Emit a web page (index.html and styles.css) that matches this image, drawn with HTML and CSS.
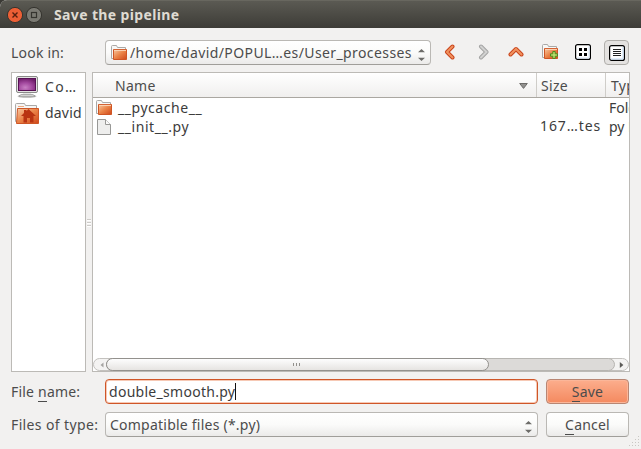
FILE: index.html
```html
<!DOCTYPE html>
<html lang="en">
<head>
<meta charset="utf-8">
<title>Save the pipeline</title>
<link rel="stylesheet" href="styles.css">
</head>
<body>
<svg width="0" height="0" class="defs" aria-hidden="true">
  <defs>
    <linearGradient id="folder" x1="0" y1="0" x2="1" y2="1"><stop offset="0" stop-color="#f8c9a2"/><stop offset=".5" stop-color="#ea8246"/><stop offset="1" stop-color="#cf471b"/></linearGradient>
    <radialGradient id="screen" cx=".4" cy=".75" r=".8"><stop offset="0" stop-color="#c87fc4"/><stop offset=".5" stop-color="#a2489e"/><stop offset="1" stop-color="#6d1a68"/></radialGradient>
    <symbol id="icon-folder" viewBox="0 0 16 16">
      <path d="M.5 13.5V1.5Q.5.5 1.5.5H5.5L6.5 2.5H14.5V13.5Z" fill="#f7f7f6" stroke="#aaa9a7"/>
      <path d="M2.5 4.5H15.5V14.5H2.5Z" fill="url(#folder)" stroke="#cf5524"/>
      <path d="M3 5.4H15" stroke="#fbd7ba"/>
    </symbol>
  </defs>
</svg>
<div class="dialog">
  <header class="titlebar">
    <svg class="winbtns" width="36" height="18" viewBox="0 0 36 18">
      <circle cx="9" cy="9" r="7.6" fill="#ed5f35" stroke="#35342f"/>
      <path d="M6.5 6.5L11.5 11.5M11.5 6.5L6.5 11.5" stroke="#57200f" stroke-width="1.4"/>
      <circle cx="28" cy="9" r="7.6" fill="#7b7a73" stroke="#35342f"/>
      <rect x="25.5" y="6.5" width="5" height="5" fill="none" stroke="#35342f" stroke-width="1.2"/>
    </svg>
    <h1>Save the pipeline</h1>
  </header>

  <div class="row lookin">
    <span class="label l-look">Look in:</span>
    <div class="combo path">
      <svg class="i16" width="16" height="16"><use href="#icon-folder"/></svg>
      <span class="t-path">/home/david/POPUL…es/User_processes</span>
      <svg class="spin" width="7" height="12" viewBox="0 0 7 12"><path d="M0 3.2L3.5 0L7 3.2ZM0 8.8L3.5 12L7 8.8Z" fill="#6d6c69"/></svg>
    </div>
    <div class="tools">
      <svg width="12" height="16" viewBox="0 0 12 16"><path d="M8.5 2.5L3 8L8.5 13.5" fill="none" stroke="#c9441b" stroke-width="4" stroke-linecap="round" stroke-linejoin="round"/><path d="M8.5 2.5L3 8L8.5 13.5" fill="none" stroke="#f0925f" stroke-width="2" stroke-linecap="round"/></svg>
      <svg class="t-fwd" width="12" height="16" viewBox="0 0 12 16"><path d="M3 2.5L8.5 8L3 13.5" fill="none" stroke="#a4a4a3" stroke-width="4" stroke-linecap="round" stroke-linejoin="round"/><path d="M3 2.5L8.5 8L3 13.5" fill="none" stroke="#d2d2d1" stroke-width="2" stroke-linecap="round"/></svg>
      <svg class="t-up" width="16" height="12" viewBox="0 0 16 12"><path d="M2.5 8.5L8 3L13.5 8.5" fill="none" stroke="#c9441b" stroke-width="4" stroke-linecap="round" stroke-linejoin="round"/><path d="M2.5 8.5L8 3L13.5 8.5" fill="none" stroke="#f0925f" stroke-width="2" stroke-linecap="round"/></svg>
      <svg class="t-new" width="17" height="16" viewBox="0 0 17 16"><use href="#icon-folder" width="16" height="16"/><path d="M10.8 7.5h2.4v2.3h2.3v2.4h-2.3v2.3h-2.4v-2.3H8.5V9.8h2.3Z" fill="#b6dc69" stroke="#4f8d1c"/></svg>
      <svg class="t-icons" width="16" height="16" viewBox="0 0 16 16"><rect x=".6" y=".6" width="14.8" height="14.8" rx="2" fill="#fff" stroke="#000" stroke-width="1.2"/><path d="M2 14H14V2" fill="none" stroke="#d4e4f6"/><path d="M4 4h3v3H4zM9 4h3v3H9zM4 9h3v3H4zM9 9h3v3H9z"/></svg>
      <span class="toggle"><svg width="16" height="16" viewBox="0 0 16 16"><rect x=".6" y=".6" width="14.8" height="14.8" rx="2" fill="#fff" stroke="#000" stroke-width="1.2"/><path d="M2 14H14V2" fill="none" stroke="#c4dcf6"/><path d="M4 4.5h8M4 6.5h8M4 8.5h8M4 10.5h8" stroke="#222"/></svg></span>
    </div>
  </div>

  <main class="panes">
    <ul class="sidebar">
      <li>
        <svg width="24" height="24" viewBox="0 0 24 24"><ellipse cx="12" cy="21.3" rx="9.5" ry="1.8" fill="#c4c4c2"/><path d="M8 18h8l1 3H7z" fill="#e6e6e4"/><path d="M4 21.2L6 19.6H18L20 21.2Z" fill="#f0f0ee" stroke="#777" stroke-width=".6"/><rect x="1.5" y="1.5" width="21" height="16" rx="1.5" fill="#e2e2e0" stroke="#8b8b89"/><rect x="3.5" y="3.5" width="17" height="12" fill="url(#screen)" stroke="#571154"/></svg>
        <span class="t-co">Co…</span>
      </li>
      <li>
        <svg width="24" height="24" viewBox="0 0 24 24"><path d="M.5 20.5V3.5Q.5 2.5 1.5 2.5H9.5L10.5 4.5H21.5V20.5Z" fill="#f6f5f4" stroke="#aaa9a7"/><path d="M3 5.5h6" stroke="#eeaa80"/><path d="M2.5 7.5H23.5V22.5H1.5Z" fill="url(#folder)" stroke="#ce5626"/><path d="M13.5 8L21 15H18.5V21.5H15V17H12V21.5H8.5V15H6L9 12.1V9H11.5V10z" fill="#b93412"/></svg>
        <span class="t-david">david</span>
      </li>
    </ul>
    <div class="splitter"><i></i><i></i><i></i></div>
    <section class="files">
      <div class="grid head">
        <div class="c-name"><span class="t-name">Name</span><svg width="9" height="6" viewBox="0 0 9 6"><path d="M.7.5H8.3L4.5 5.4Z" fill="#92918f" stroke="#6d6c69"/></svg></div>
        <div class="c-size"><span class="t-size">Size</span></div>
        <div class="c-type">Type</div>
      </div>
      <div class="grid item">
        <div class="c-file"><svg class="i16" width="16" height="16"><use href="#icon-folder"/></svg><span class="t-cache">__pycache__</span></div>
        <div></div><div class="c-kind">Folder</div>
      </div>
      <div class="grid item">
        <div class="c-file"><svg class="i16" width="16" height="16" viewBox="0 0 16 16"><path d="M1.5.5H9.5L14.5 5.5V15.5H1.5Z" fill="#eeeeed" stroke="#989896"/><path d="M9.5.5V5.5H14.5" fill="#fafafa" stroke="#989896"/></svg><span class="t-init">__init__.py</span></div>
        <div class="c-bytes">167…tes</div><div class="c-kind">py File</div>
      </div>
      <div class="scroll">
        <svg class="arr" width="4" height="6" viewBox="0 0 4 6"><path d="M3.5.5V5.5L.5 3Z" fill="#a5a4a2"/></svg>
        <div class="trough"><div class="thumb"><i></i><i></i><i></i></div></div>
        <svg class="arr" width="5" height="6" viewBox="0 0 5 6"><path d="M.8 0V6L4.4 3Z" fill="#5c5b58"/></svg>
      </div>
    </section>
  </main>

  <div class="row name">
    <span class="label l-name">File <u>n</u>ame:</span>
    <div class="field"><span class="t-double">double_smooth.py</span><b class="caret"></b></div>
    <button class="btn save"><span><u>S</u>ave</span></button>
  </div>
  <div class="row type">
    <span class="label l-type">Files of type:</span>
    <div class="combo filter"><span class="t-compat">Compatible files (*.py)</span>
      <svg class="spin" width="7" height="12" viewBox="0 0 7 12"><path d="M0 3.2L3.5 0L7 3.2ZM0 8.8L3.5 12L7 8.8Z" fill="#6d6c69"/></svg></div>
    <button class="btn cancel"><span><u>C</u>ancel</span></button>
  </div>
  <svg class="grip" width="11" height="11" viewBox="0 0 11 11"><path d="M9 0h1v1H9zM6 3h1v1H6zM9 3h1v1H9zM3 6h1v1H3zM6 6h1v1H6zM9 6h1v1H9zM0 9h1v1H0zM3 9h1v1H3zM6 9h1v1H6zM9 9h1v1H9z" fill="#c9c7c3"/></svg>
</div>
</body>
</html>
```
FILE: styles.css
```css
* { box-sizing: border-box; }
html, body { margin: 0; height: 100%; overflow: hidden; }
body { background: #3b3a35; font: 14px/18px "Noto Sans", "Open Sans", sans-serif; color: #4c4c4c; }
svg { display: block; flex: none; }
.defs { position: absolute; }
span { white-space: nowrap; }
.dialog { position: relative; width: 641px; height: 449px; background: #f2f1f0; border-radius: 7px 0 0 0; overflow: hidden; }
.titlebar { display: flex; align-items: center; height: 28px; padding-left: 6px; background: linear-gradient(#5b5a53, #3d3c37); border-top: 1px solid #68675f; }
h1 { margin: 0 0 0 12px; font-size: 14px; line-height: 18px; font-weight: 700; letter-spacing: .36px; color: #dfdbd2; white-space: nowrap; }

.row { display: flex; align-items: center; height: 25px; margin: 0 11px; }
.lookin { margin-top: 12px; }
.name { margin-top: 7px; }
.type { margin-top: 8px; }
.label { width: 94px; flex: none; }
.l-look { letter-spacing: .2px; }
.l-name { letter-spacing: .2px; }
.l-type { letter-spacing: .37px; }
u { text-decoration: none; border-bottom: 1px solid #4c4c4c; }
.combo { display: flex; align-items: center; height: 25px; border: 1px solid #bab8b4; border-bottom-color: #a09e9a; border-radius: 4px; background: linear-gradient(#fff, #fbfbfa 50%, #ebeae9); }
.path { width: 326px; padding: 0 5px; }
.path .t-path { margin-left: 3px; letter-spacing: .4px; }
.spin { margin: 5px 0 0 auto; }
.filter { width: 433px; padding: 0 5px 0 4px; }
.t-compat { letter-spacing: .23px; }
.tools { display: flex; align-items: center; margin-left: 13px; padding-bottom: 1px; }
.t-fwd { margin-left: 22px; }
.t-up { margin-left: 18px; }
.t-new { margin-left: 18px; }
.t-icons { margin-left: 16px; }
.toggle { display: flex; margin: 1px 0 0 13px; width: 25px; height: 25px; padding: 4px 0 0 4px; border: 1px solid #b0aeaa; border-radius: 4px; background: #e4e2e0; }

.panes { display: flex; height: 300px; margin: 7px 11px 0; color: #3c3c3c; }
.sidebar { list-style: none; margin: 0; padding: 1px 0 0 3px; width: 75px; background: #fff; border: 1px solid #bcbab6; overflow: hidden; }
.sidebar li { display: flex; align-items: center; gap: 6px; height: 26px; }
.t-co { letter-spacing: 1.3px; }
.t-david { letter-spacing: .2px; }
.splitter { display: flex; flex-direction: column; align-items: center; justify-content: center; gap: 2px; width: 6px; }
.splitter i { width: 4px; height: 1px; background: #cdcbc8; box-shadow: 0 1px #fff; }
.files { display: flex; flex-direction: column; width: 538px; background: #fff; border: 1px solid #bcbab6; overflow: hidden; }
.grid { display: grid; grid-template-columns: 443px 70px 23px; flex: none; }
.head { height: 25px; color: #4c4c4c; background: linear-gradient(#fff, #f0efee); border-bottom: 1px solid #aaa7a1; letter-spacing: .3px; }
.head > div { display: flex; align-items: center; padding-top: 2px; height: 24px; overflow: hidden; }
.c-name { justify-content: space-between; padding-left: 22px; padding-right: 8px; }
.c-size { border-left: 1px solid #cfcdc9; padding-left: 4px; }
.head .c-type { border-left: 1px solid #cfcdc9; padding-left: 5px; }
.head .c-size { margin-right: 1px; }
.head .c-type { margin-left: -1px; }
.item { height: 19px; line-height: 19px; white-space: nowrap; }
.item > div { overflow: hidden; }
.item .c-file { display: flex; align-items: center; padding-left: 3px; gap: 6px; letter-spacing: .55px; }
.c-bytes { padding-left: 4px; letter-spacing: .9px; line-height: 17px; }
.c-kind { padding-left: 3px; }
.scroll { display: flex; align-items: center; height: 13px; margin-top: auto; border: 1px solid #c3c1be; border-radius: 7px; background: #f4f3f2; padding: 0 4px 0 6px; }
.trough { flex: 1; height: 13px; margin: 0 4px 0 2px; background: #dcdad8; border: 1px solid #b7b5b1; border-radius: 7px; }
.thumb { display: flex; align-items: center; justify-content: center; gap: 2px; width: 383px; height: 13px; margin: -1px; border: 1px solid #93918d; border-radius: 7px; background: linear-gradient(#fdfdfd, #e6e4e2); }
.thumb i { position: relative; left: -1px; width: 1px; height: 3px; background: #92908c; }

.field { display: flex; align-items: center; width: 433px; height: 25px; padding-left: 3px; background: #fff; border: 1px solid #cf5628; border-radius: 4px; box-shadow: inset 0 0 0 1px #f6c9b5; color: #3c3c3c; }
.t-double { letter-spacing: .28px; }
.caret { width: 1px; height: 17px; background: #111; }
.btn { width: 83px; height: 25px; margin: 0 0 0 8px; padding: 0; font: inherit; letter-spacing: .2px; color: #4c4c4c; border: 1px solid #bab8b4; border-bottom-color: #a09e9a; border-radius: 4px; background: linear-gradient(#fff, #fbfbfa 50%, #ebeae9); }
.save { border-color: #b88673; background: linear-gradient(#fcae8d, #f4895f); box-shadow: inset 0 0 0 1px #fbb699; }
.grip { position: absolute; right: 1px; bottom: 2px; }
```
